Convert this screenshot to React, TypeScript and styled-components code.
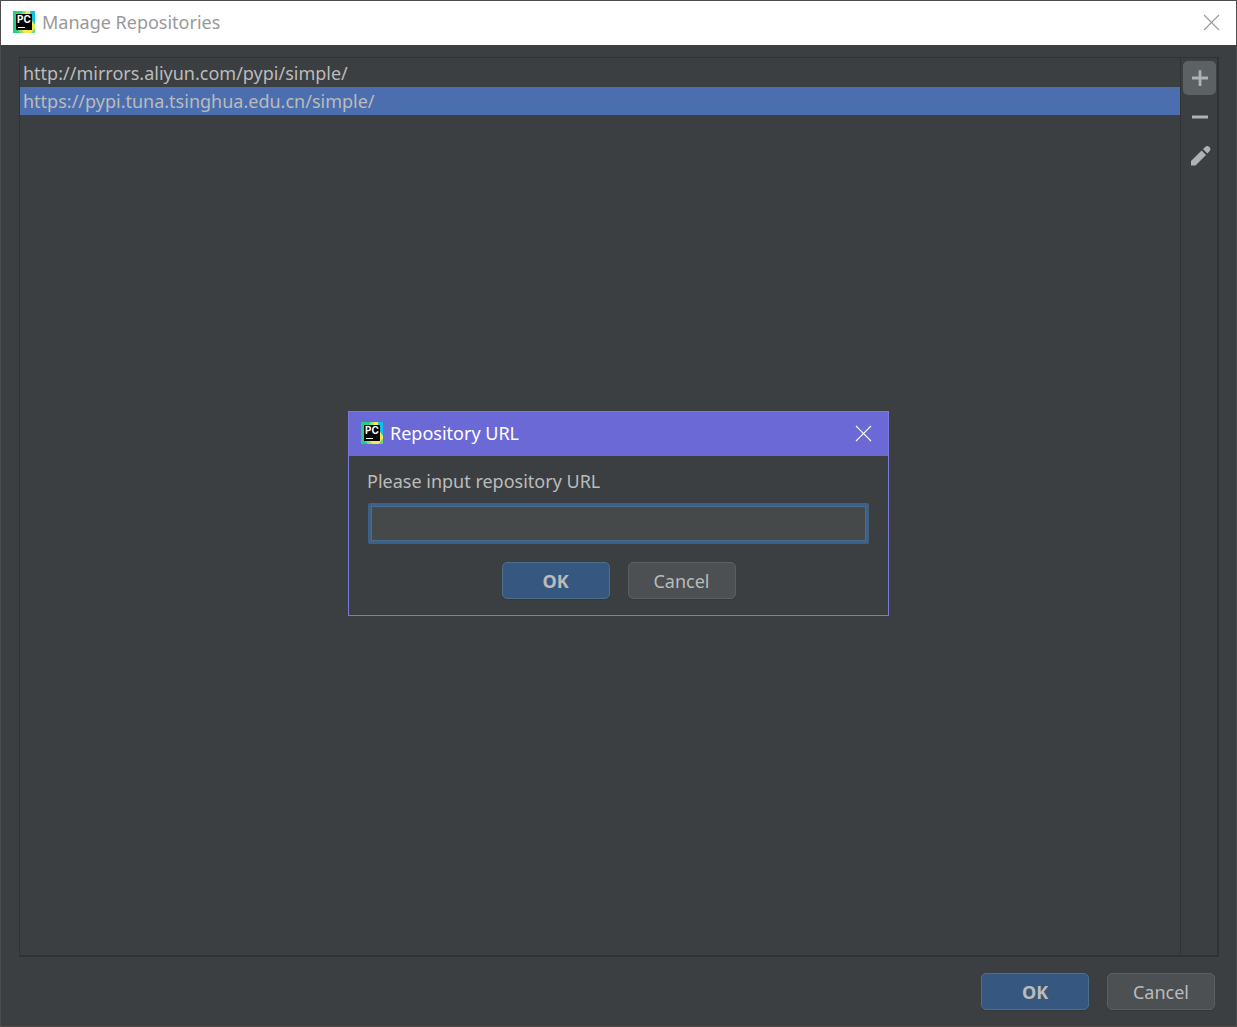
import React, { useState } from "react";
import styled, { createGlobalStyle } from "styled-components";

const GlobalStyle = createGlobalStyle`
  *, *::before, *::after { box-sizing: border-box; }
  body {
    margin: 0;
    background: #3c3f41;
    color: #bbbbbb;
    font-family: "Noto Sans", "Open Sans", sans-serif;
    font-size: 18px;
    line-height: 28px;
  }
  button, input { font: inherit; color: inherit; }
`;

const Window = styled.main`
  display: flex;
  flex-direction: column;
  min-height: 100vh;
  border: 1px solid #4e4d4e;
  background: #3c3f41;
`;

const TitleBar = styled.header<{ $active?: boolean }>`
  display: flex;
  align-items: center;
  gap: 7px;
  height: 44px;
  padding: 0 14px 2px 12px;
  background: ${(p) => (p.$active ? "#6b69d6" : "#ffffff")};
  color: ${(p) => (p.$active ? "#ffffff" : "#999999")};
`;

const Title = styled.h1`
  flex: 1;
  margin: 0;
  font-size: 18px;
  font-weight: 400;
`;

const CloseButton = styled.button`
  display: flex;
  padding: 2px;
  border: 0;
  background: none;
`;

const Content = styled.div`
  display: flex;
  flex: 1;
  flex-direction: column;
  padding: 12px 17px 16px 18px;
`;

const ListPanel = styled.section`
  display: flex;
  flex: 1;
  border: 1px solid #323232;
  border-width: 1px 2px 2px 1px;
`;

const RepositoryList = styled.ul`
  flex: 1;
  margin: 0;
  padding: 1px 0;
  list-style: none;
`;

const RepositoryRow = styled.button<{ $selected: boolean }>`
  display: block;
  width: 100%;
  height: 28px;
  padding: 0 3px;
  border: 0;
  background: ${(p) => (p.$selected ? "#4b6eaf" : "transparent")};
  text-align: left;
`;

const Toolbar = styled.div`
  display: flex;
  flex-direction: column;
  gap: 5px;
  padding: 3px 1px 3px 2px;
  border-left: 1px solid #323232;
`;

const ToolButton = styled.button<{ $active?: boolean }>`
  display: grid;
  place-items: center;
  width: 33px;
  height: 34px;
  padding: 0;
  border: 0;
  border-radius: 5px;
  background: ${(p) => (p.$active ? "#5c6164" : "transparent")};
`;

const Actions = styled.footer<{ $centered?: boolean }>`
  display: flex;
  justify-content: ${(p) => (p.$centered ? "center" : "flex-end")};
  gap: 18px;
  padding: ${(p) => (p.$centered ? "18px 0 0" : "16px 4px 0")};
`;

const ActionButton = styled.button<{ $primary?: boolean }>`
  width: 108px;
  height: 37px;
  padding: 0;
  border: 1px solid ${(p) => (p.$primary ? "#4c708c" : "#5e6060")};
  border-radius: 5px;
  background: ${(p) => (p.$primary ? "#365880" : "#4c5052")};
  box-shadow: 0 1px 1px #353739;
  font-weight: ${(p) => (p.$primary ? 700 : 400)};
`;

const Dialog = styled.div`
  position: fixed;
  inset: 0;
  width: 541px;
  max-width: 100%;
  height: fit-content;
  margin: auto;
  border: 1px solid #7b79dc;
  background: #3c3f41;
`;

const DialogBody = styled.form`
  padding: 11px 18px 16px;
`;

const FieldLabel = styled.label`
  display: block;
`;

const UrlInput = styled.input`
  display: block;
  width: calc(100% - 2px);
  height: 41px;
  margin: 8px 1px 0;
  padding: 0 6px;
  border: 3px solid #3d6185;
  border-radius: 2px;
  outline: 0;
  box-shadow: inset 0 0 0 1px #466d94;
  background: #45494a;
`;

function ProductLogo() {
  return (
    <svg width="22" height="22" viewBox="0 0 22 22" aria-hidden="true">
      <path fill="#22cf88" d="M0 0H13L9 22H0Z" />
      <path fill="#8fe070" d="M10 0H14V3H8Z" />
      <path fill="#e6ec55" d="M13 0H18V3H12Z" />
      <path fill="#0fc0e8" d="M17 0H22V14L18 9Z" />
      <path fill="#f4ea4c" d="M18 8 22 14V17L18 22H9L5 18H18Z" />
      <path fill="#8fe070" d="M4 18H8L11 22H7Z" />
      <path fill="#5fdc80" d="M22 17V22H18Z" />
      <path fill="#000000" d="M3 3H19V19H3Z" />
      <path fill="#ffffff" d="M5 16H12V17H5Z" />
      <text x="4" y="12" fill="#ffffff" fontFamily="Inter, sans-serif" fontSize="10" fontWeight="700">
        PC
      </text>
    </svg>
  );
}

function CloseIcon() {
  return (
    <svg width="17" height="17" viewBox="0 0 17 17" stroke="currentColor" strokeWidth="1.1" aria-hidden="true">
      <path d="M1 1 16 16M16 1 1 16" />
    </svg>
  );
}

function ToolIcon({ path }: { path: string }) {
  return (
    <svg width="24" height="24" viewBox="0 0 24 24" fill="#afb1b3" aria-hidden="true">
      <path d={path} />
    </svg>
  );
}

const tools = [
  { label: "Add", path: "M10.6 4.2H13.4V10.6H20V13.4H13.4V20H10.6V13.4H4V10.6H10.6Z" },
  { label: "Remove", path: "M4 10.5H20V13.5H4Z" },
  {
    label: "Edit",
    path: "M3 17V21.5H7.5L18 11 13.6 6.6ZM15 5.2 17.2 3Q19 1.2 20.8 2.6L21.8 3.6Q23.3 5.4 21.7 7L19.4 9.4Z",
  },
];

const repositories = ["http://mirrors.aliyun.com/pypi/simple/", "https://pypi.tuna.tsinghua.edu.cn/simple/"];

export default function App() {
  const [selected, setSelected] = useState(1);
  const [url, setUrl] = useState("");

  return (
    <>
      <GlobalStyle />
      <Window>
        <TitleBar>
          <ProductLogo />
          <Title>Manage Repositories</Title>
          <CloseButton type="button" aria-label="Close window">
            <CloseIcon />
          </CloseButton>
        </TitleBar>
        <Content>
          <ListPanel>
            <RepositoryList>
              {repositories.map((repository, index) => (
                <li key={repository}>
                  <RepositoryRow type="button" $selected={index === selected} onClick={() => setSelected(index)}>
                    {repository}
                  </RepositoryRow>
                </li>
              ))}
            </RepositoryList>
            <Toolbar>
              {tools.map((tool, index) => (
                <ToolButton key={tool.label} type="button" aria-label={tool.label} $active={index === 0}>
                  <ToolIcon path={tool.path} />
                </ToolButton>
              ))}
            </Toolbar>
          </ListPanel>
          <Actions>
            <ActionButton type="button" $primary>
              OK
            </ActionButton>
            <ActionButton type="button">Cancel</ActionButton>
          </Actions>
        </Content>
      </Window>
      <Dialog role="dialog" aria-labelledby="dialog-title">
        <TitleBar $active>
          <ProductLogo />
          <Title as="h2" id="dialog-title">
            Repository URL
          </Title>
          <CloseButton type="button" aria-label="Close dialog">
            <CloseIcon />
          </CloseButton>
        </TitleBar>
        <DialogBody onSubmit={(event) => event.preventDefault()}>
          <FieldLabel htmlFor="repository-url">Please input repository URL</FieldLabel>
          <UrlInput id="repository-url" type="text" value={url} onChange={(event) => setUrl(event.target.value)} />
          <Actions $centered>
            <ActionButton type="submit" $primary>
              OK
            </ActionButton>
            <ActionButton type="button">Cancel</ActionButton>
          </Actions>
        </DialogBody>
      </Dialog>
    </>
  );
}
